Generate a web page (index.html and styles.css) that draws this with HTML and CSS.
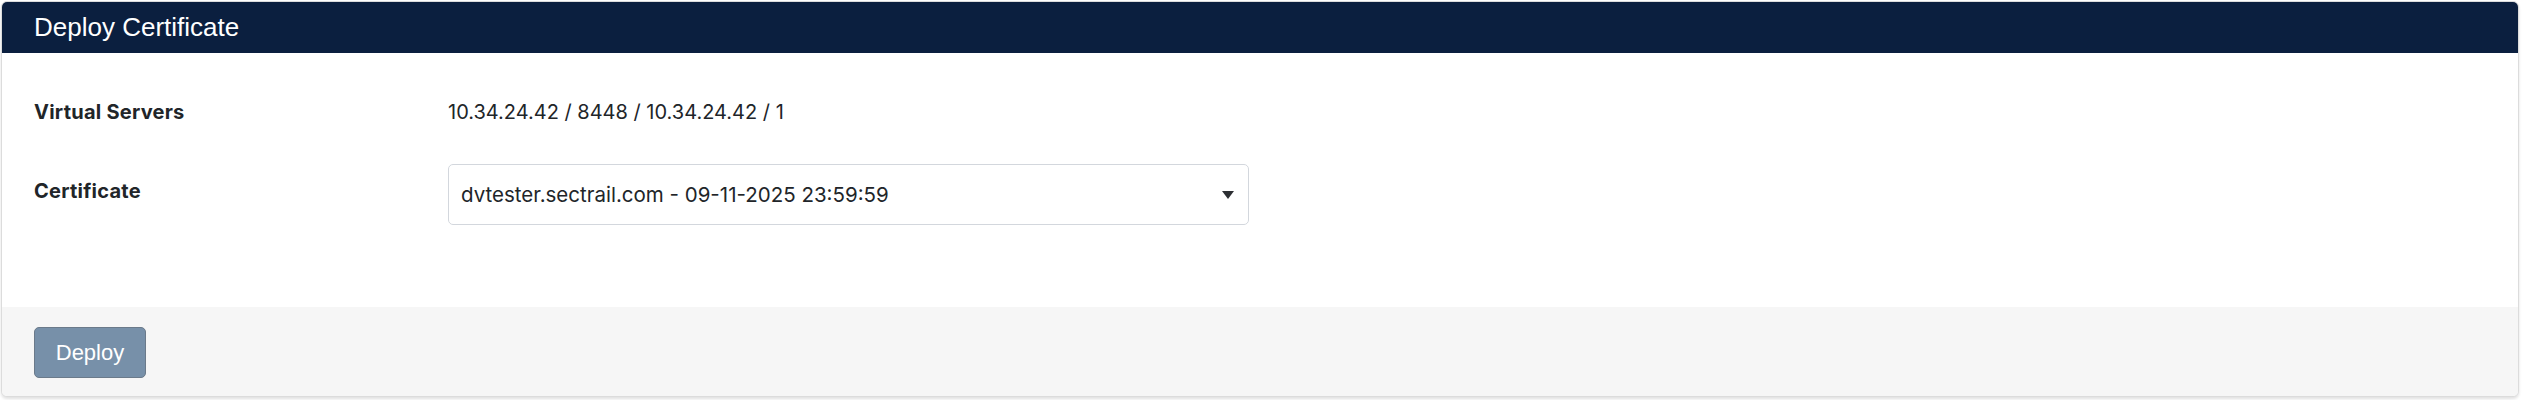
FILE: index.html
```html
<!DOCTYPE html>
<html lang="en">
<head>
<meta charset="utf-8">
<title>Deploy Certificate</title>
<link rel="stylesheet" href="styles.css">
</head>
<body>
<div class="page">
  <section class="card">
    <header class="card-header">Deploy Certificate</header>
    <div class="card-body">
      <div class="form-row">
        <div class="label">Virtual Servers</div>
        <div class="value">10.34.24.42 / 8448 / 10.34.24.42 / 1</div>
      </div>
      <div class="form-row form-row-select">
        <div class="label label-select">Certificate</div>
        <div class="select">
          <span class="select-text">dvtester.sectrail.com - 09-11-2025 23:59:59</span>
          <svg class="caret" width="12" height="8" viewBox="0 0 12 8"><path d="M0 0 H12 L6 8 Z" fill="#2d2f33"/></svg>
        </div>
      </div>
    </div>
    <footer class="card-footer">
      <button class="btn" type="button">Deploy</button>
    </footer>
  </section>
</div>
</body>
</html>
```

FILE: styles.css
```css
html, body {
  margin: 0;
  padding: 0;
  background: #ffffff;
}

.page {
  padding: 1px 9px 3px 1px;
}

.card {
  border: 1px solid #dcdcdc;
  border-radius: 6px;
  overflow: hidden;
  box-shadow: 0 2px 3px rgba(0, 0, 0, 0.12);
  background: #ffffff;
}

.card-header {
  background: #0b1f3f;
  color: #ffffff;
  font-family: "Liberation Sans", Arial, sans-serif;
  font-size: 26px;
  line-height: 51px;
  height: 51px;
  padding: 0 32px;
}

.card-body {
  padding: 44px 32px 82px 32px;
  display: flex;
  flex-direction: column;
  gap: 37px;
  font-family: Inter, "Noto Sans", sans-serif;
  color: #212529;
  font-size: 20px;
}

.form-row {
  display: grid;
  grid-template-columns: 414px 801px;
  align-items: center;
}

.form-row-select {
  align-items: start;
}

.label {
  font-weight: 700;
  line-height: 30px;
  letter-spacing: 0.25px;
}

.label-select {
  padding-top: 12px;
}

.value {
  line-height: 30px;
}

.select {
  height: 59px;
  border: 1px solid #d3d7dd;
  border-radius: 5px;
  display: flex;
  align-items: center;
  justify-content: space-between;
  padding: 0 14px 0 12px;
}

.select-text {
  font-size: 20.5px;
  line-height: 30px;
}

.caret {
  display: block;
}

.card-footer {
  background: #f6f6f6;
  padding: 20px 32px 18px 32px;
}

.btn {
  display: block;
  width: 112px;
  height: 51px;
  background: #7790a9;
  border: 1px solid #6b7a8a;
  border-radius: 5px;
  color: #ffffff;
  font-family: "Liberation Sans", Arial, sans-serif;
  font-size: 22px;
  padding: 0;
}
```
